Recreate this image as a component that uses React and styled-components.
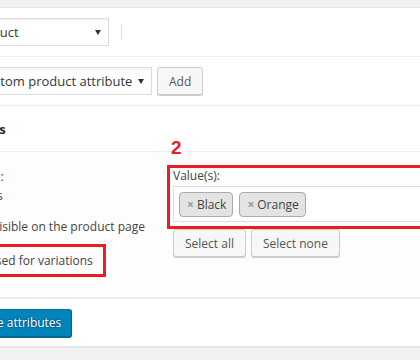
import React from "react";
import styled, { createGlobalStyle } from "styled-components";

const GlobalStyle = createGlobalStyle`
  html, body {
    margin: 0;
    background: #f1f1f1;
  }
  body {
    font-family: "Open Sans", "Noto Sans", sans-serif;
    font-size: 12px;
    color: #444;
  }
  * {
    box-sizing: border-box;
  }
`;

const tabs = ["General", "Inventory", "Shipping", "Linked Products", "Attributes", "Variations", "Advanced"];
const values = ["Black", "Orange"];

export default function App() {
  return (
    <Viewport>
      <GlobalStyle />
      <Postbox>
        <Header>
          <HeaderTitle>Product data —</HeaderTitle>
          <Select $width={200}>
            Variable product
            <Caret />
          </Select>
          <Divider />
        </Header>
        <Body>
          <Tabs>
            {tabs.map((t) => (
              <Tab key={t} $active={t === "Attributes"}>{t}</Tab>
            ))}
          </Tabs>
          <Panel>
            <Toolbar>
              <Select $width={185} $indent={10}>
                Custom product attribute
                <Caret />
              </Select>
              <Button>Add</Button>
            </Toolbar>
            <AttrHeading>Colors</AttrHeading>
            <AttrBody>
              <LeftCol>
                <Line>Name:</Line>
                <Line>Colors</Line>
                <CheckRow $gap={12} $indent={5}>
                  <Checkbox />
                  Visible on the product page
                </CheckRow>
                <Highlight $inline>
                  <CheckRow>
                    <Checkbox />
                    Used for variations
                  </CheckRow>
                </Highlight>
              </LeftCol>
              <RightCol>
                <Marker>2</Marker>
                <Highlight>
                  <FieldLabel>Value(s):</FieldLabel>
                  <MultiSelect>
                    {values.map((v) => (
                      <Chip key={v}>
                        <ChipRemove>×</ChipRemove>
                        {v}
                      </Chip>
                    ))}
                  </MultiSelect>
                </Highlight>
                <ButtonRow>
                  <Button>Select all</Button>
                  <Button>Select none</Button>
                </ButtonRow>
              </RightCol>
            </AttrBody>
            <Toolbar $last>
              <PrimaryButton>Save attributes</PrimaryButton>
            </Toolbar>
          </Panel>
        </Body>
      </Postbox>
    </Viewport>
  );
}

const Viewport = styled.div`
  width: 420px;
  height: 360px;
  overflow: hidden;
  padding-top: 7px;
`;

const Postbox = styled.div`
  width: 660px;
  margin-left: -200px;
  background: #fff;
  border: 1px solid #e5e5e5;
  box-shadow: 0 1px 1px rgba(0, 0, 0, 0.04);
`;

const Header = styled.div`
  display: flex;
  align-items: center;
  height: 49px;
  padding: 0 12px;
  border-bottom: 1px solid #eee;
`;

const HeaderTitle = styled.h2`
  flex: 0 0 96px;
  margin: 0;
  font-size: 14px;
  font-weight: 600;
  color: #23282d;
  white-space: nowrap;
  overflow: hidden;
`;

const Select = styled.div`
  display: flex;
  align-items: center;
  justify-content: space-between;
  flex-shrink: 0;
  width: ${(p) => p.$width}px;
  height: 28px;
  padding: 0 7px 0 ${(p) => p.$indent || 8}px;
  border: 1px solid #ddd;
  background: #fff;
  color: #32373c;
  font-size: 13px;
  box-shadow: inset 0 1px 2px rgba(0, 0, 0, 0.07);
  white-space: nowrap;
`;

const Caret = styled.span`
  width: 0;
  height: 0;
  border-left: 3.5px solid transparent;
  border-right: 3.5px solid transparent;
  border-top: 5px solid #333;
`;

const Divider = styled.span`
  width: 1px;
  height: 16px;
  margin-left: 12px;
  background: #ddd;
`;

const Body = styled.div`
  display: flex;
`;

const Tabs = styled.ul`
  flex: 0 0 154px;
  margin: 0;
  padding: 0;
  list-style: none;
  background: #fafafa;
  border-right: 1px solid #eee;
`;

const Tab = styled.li`
  padding: 10px;
  border-bottom: 1px solid #eee;
  color: ${(p) => (p.$active ? "#555" : "#0073aa")};
  background: ${(p) => (p.$active ? "#eee" : "transparent")};
`;

const Panel = styled.div`
  flex: 1;
  min-width: 0;
`;

const Toolbar = styled.div`
  display: flex;
  align-items: center;
  gap: 5px;
  height: ${(p) => (p.$last ? 47 : 49)}px;
  padding: 0 12px;
  border-bottom: ${(p) => (p.$last ? "none" : "1px solid #eee")};
`;

const Button = styled.button`
  height: 28px;
  padding: 0 11px;
  border: 1px solid #ccc;
  border-radius: 3px;
  background: #f7f7f7;
  box-shadow: 0 1px 0 #ccc;
  color: #555;
  font: inherit;
  white-space: nowrap;
`;

const PrimaryButton = styled(Button)`
  width: 105px;
  padding: 0;
  background: #0085ba;
  border-color: #0073aa #006799 #006799;
  box-shadow: 0 1px 0 #006799;
  color: #fff;
  text-shadow: 0 -1px 1px #006799, 1px 0 1px #006799, 0 1px 1px #006799, -1px 0 1px #006799;
`;

const AttrHeading = styled.h3`
  display: flex;
  align-items: center;
  height: 46px;
  margin: 0;
  padding: 0 10px;
  border-bottom: 1px solid #eee;
  font-size: 13px;
  font-weight: 700;
  color: #23282d;
`;

const AttrBody = styled.div`
  display: grid;
  grid-template-columns: 190px 1fr;
  column-gap: 16px;
  height: 147px;
  padding: 15px 12px 0;
  background: #fdfdfd;
  border-bottom: 2px solid #eee;
`;

const LeftCol = styled.div`
  display: flex;
  flex-direction: column;
  align-items: flex-start;
`;

const Line = styled.div`
  line-height: 19px;
`;

const CheckRow = styled.label`
  display: flex;
  align-items: center;
  gap: ${(p) => 4 + (p.$indent || 0)}px;
  margin-top: ${(p) => p.$gap || 0}px;
  line-height: 19px;
  white-space: nowrap;
`;

const Checkbox = styled.span`
  width: 16px;
  height: 16px;
  border: 1px solid #b4b9be;
  background: #fff;
  box-shadow: inset 0 1px 2px rgba(0, 0, 0, 0.1);
`;

const Highlight = styled.div`
  display: ${(p) => (p.$inline ? "inline-flex" : "block")};
  margin: ${(p) => (p.$inline ? "8px 0 0 -6px" : "-2px -6px 0")};
  padding: ${(p) => (p.$inline ? "4px 10px 4px 3px" : "0 3px 4px")};
  border: 3px solid #ec1c24;
`;

const RightCol = styled.div`
  position: relative;
`;

const Marker = styled.span`
  position: absolute;
  top: -29px;
  left: -2px;
  font-family: "Liberation Sans", Arial, sans-serif;
  font-size: 19px;
  font-weight: 700;
  line-height: 19px;
  color: #ec1c24;
`;

const FieldLabel = styled.div`
  margin-bottom: 2px;
  line-height: 16px;
`;

const MultiSelect = styled.div`
  display: flex;
  gap: 6px;
  padding: 5px 5px 4px;
  border: 1px solid #ddd;
  background: #fff;
`;

const Chip = styled.span`
  display: inline-flex;
  align-items: center;
  height: 25px;
  padding: 0 6px 0 7px;
  border: 1px solid #aaa;
  border-radius: 4px;
  background: #e4e4e4;
  color: #444;
`;

const ChipRemove = styled.span`
  margin-right: 3px;
  color: #999;
  font-weight: 700;
`;

const ButtonRow = styled.div`
  display: flex;
  gap: 5px;
`;
